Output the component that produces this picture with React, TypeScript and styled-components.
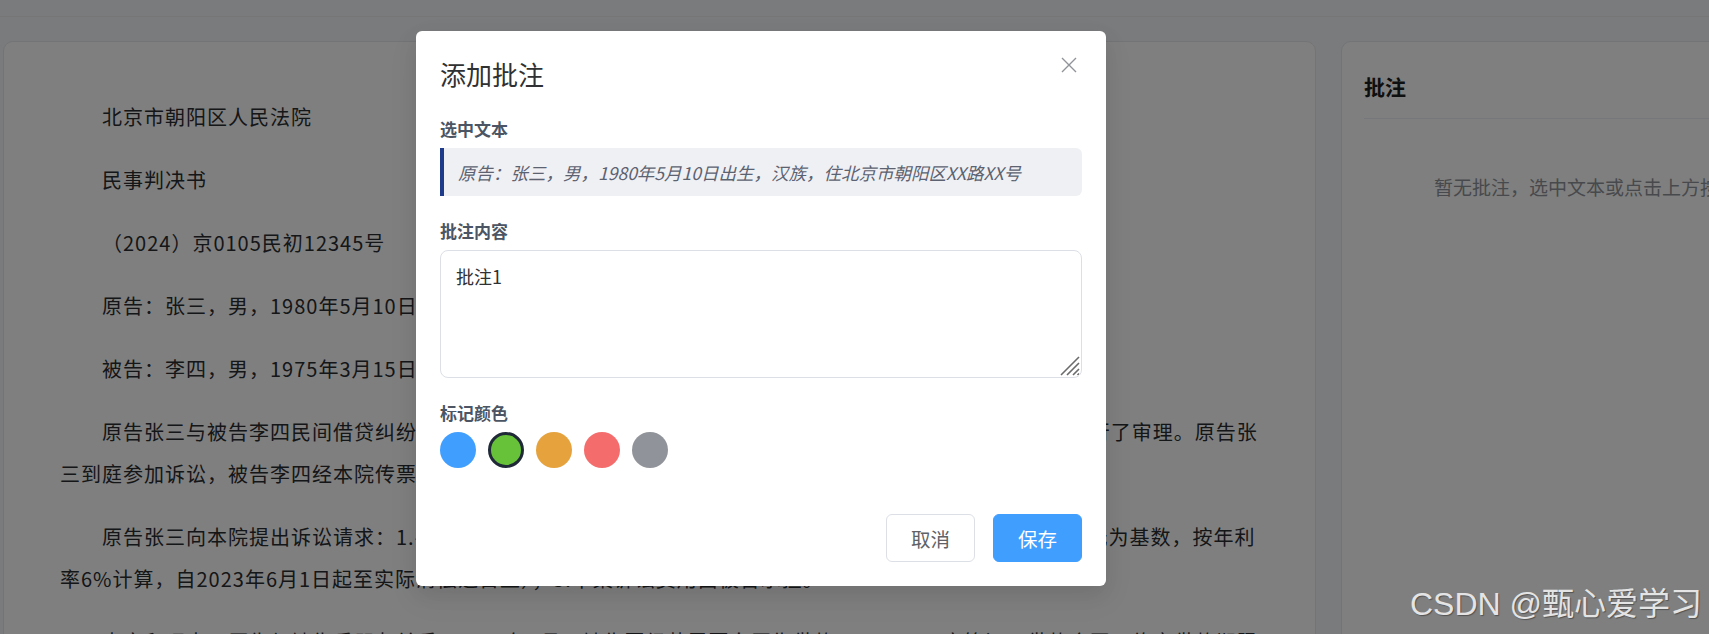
import React, { useState } from 'react';
import styled, { createGlobalStyle } from 'styled-components';

const GlobalStyle = createGlobalStyle`
	html, body {
		margin: 0;
		height: 100%;
		overflow: hidden;
		background: #f5f6f8;
		font-family: "Noto Sans CJK SC", "Noto Sans", sans-serif;
	}
	* {
		box-sizing: border-box;
	}
`;

const Page = styled.div`
	width: 1709px;
	height: 634px;
	overflow: hidden;
	position: relative;
`;

const TopBar = styled.div`
	height: 17px;
	border-bottom: 1px solid #ececec;
`;

const Main = styled.div`
	display: flex;
	gap: 25px;
	padding: 24px 0 0 3px;
`;

const Card = styled.div<{ $width: number }>`
	flex: 0 0 ${(p) => p.$width}px;
	height: 700px;
	background: #fff;
	border: 1px solid #e6e8ec;
	border-radius: 10px;
	padding: 24px 22px;
`;

const Document = styled.div`
	padding: 30px 33px 0 34px;
	color: #2b2d31;
	font-size: 20px;
	letter-spacing: 1px;
	line-height: 42px;
`;

const Para = styled.p`
	margin: 0 0 21px;
	text-indent: 42px;
`;

const SideTitle = styled.h3`
	margin: 0;
	height: 53px;
	line-height: 40px;
	font-size: 21px;
	font-weight: 700;
	color: #1d1e20;
	border-bottom: 1px solid #ebeef5;
`;

const Empty = styled.div`
	padding: 53px 0 0 70px;
	white-space: nowrap;
	font-size: 19px;
	line-height: 30px;
	color: #909399;
`;

const Overlay = styled.div`
	position: absolute;
	inset: 0;
	background: rgba(0, 0, 0, 0.5);
	padding: 31px 0 0 416px;
`;

const Dialog = styled.div`
	position: relative;
	width: 690px;
	background: #fff;
	border-radius: 6px;
	box-shadow: 0 12px 32px 4px rgba(0, 0, 0, 0.04), 0 8px 20px rgba(0, 0, 0, 0.08);
	padding: 25px 24px 24px;
`;

const DialogTitle = styled.div`
	font-size: 26px;
	line-height: 36px;
	color: #303133;
`;

const CloseBtn = styled.button`
	position: absolute;
	top: 24px;
	right: 27px;
	width: 20px;
	height: 20px;
	padding: 0;
	border: 0;
	background: none;
	display: flex;
	align-items: center;
	justify-content: center;
	cursor: pointer;
`;

const Field = styled.div<{ $gap: number }>`
	margin-top: ${(p) => p.$gap}px;
`;

const Label = styled.div`
	font-size: 17px;
	font-weight: 700;
	line-height: 22px;
	color: #4b5563;
	margin-bottom: 8px;
`;

const Quote = styled.div`
	height: 48px;
	display: flex;
	align-items: center;
	padding: 0 14px;
	border-left: 4px solid #1e3a8a;
	border-radius: 0 6px 6px 0;
	background: #eff0f4;
	font-size: 17.5px;
	font-style: italic;
	color: #5c6270;
	white-space: nowrap;
`;

const InputWrap = styled.div`
	position: relative;
`;

const NoteInput = styled.textarea`
	display: block;
	width: 100%;
	height: 128px;
	padding: 12px 15px;
	border: 1px solid #dcdfe6;
	border-radius: 8px;
	font-family: inherit;
	font-size: 18px;
	line-height: 26px;
	color: #303133;
	resize: vertical;
	outline: none;
`;

const Grip = styled.svg`
	position: absolute;
	right: 2px;
	bottom: 2px;
	pointer-events: none;
`;

const Swatches = styled.div`
	display: flex;
	gap: 12px;
`;

const Swatch = styled.button<{ $color: string; $active: boolean }>`
	width: 36px;
	height: 36px;
	padding: 0;
	border-radius: 50%;
	background: ${(p) => p.$color};
	border: ${(p) => (p.$active ? '3px solid #1f2937' : '0')};
	cursor: pointer;
`;

const Footer = styled.div`
	display: flex;
	justify-content: flex-end;
	gap: 18px;
	margin-top: 46px;
`;

const Button = styled.button<{ $primary?: boolean }>`
	height: 48px;
	padding: 0 24px;
	border-radius: 6px;
	font-family: inherit;
	font-size: 19.5px;
	border: 1px solid ${(p) => (p.$primary ? '#409eff' : '#dcdfe6')};
	background: ${(p) => (p.$primary ? '#409eff' : '#fff')};
	color: ${(p) => (p.$primary ? '#fff' : '#606266')};
	cursor: pointer;
`;

const Watermark = styled.div`
	position: absolute;
	right: 7px;
	bottom: 11px;
	font-family: "Liberation Sans", "Noto Sans CJK SC", sans-serif;
	font-size: 32px;
	line-height: 38px;
	color: #e4e4e4;
	text-shadow: 1px 1px 1px rgba(0, 0, 0, 0.35);
	pointer-events: none;
`;

const paragraphs = [
	'北京市朝阳区人民法院',
	'民事判决书',
	'（2024）京0105民初12345号',
	'原告：张三，男，1980年5月10日出生，汉族，住北京市朝阳区XX路XX号。',
	'被告：李四，男，1975年3月15日出生，汉族，住北京市海淀区XX路XX号。',
	'原告张三与被告李四民间借贷纠纷一案，本院于2024年1月15日立案后，依法适用简易程序，并公开开庭进行了审理。原告张三到庭参加诉讼，被告李四经本院传票传唤，无正当理由拒不到庭参加诉讼，本院依法缺席审理，被告仍未到庭。',
	'原告张三向本院提出诉讼请求：1.判令被告偿还借款本金人民币伍拾万元整；2.判令被告支付利息（以50万元为基数，按年利率6%计算，自2023年6月1日起至实际清偿之日止）；3.本案诉讼费用由被告承担。',
	'事实和理由：原告与被告系朋友关系。2023年6月，被告因经营需要向原告借款50万元，双方签订了借款合同，约定借款期限为一年。',
];

const colors = ['#409eff', '#67c23a', '#e6a23c', '#f56c6c', '#909399'];

const App = () => {
	const [active, setActive] = useState(1);
	const [note, setNote] = useState('批注1');

	return (
		<>
			<GlobalStyle />
			<Page>
				<TopBar />
				<Main>
					<Card $width={1313}>
						<Document>
							{paragraphs.map((text) => (
								<Para key={text}>{text}</Para>
							))}
						</Document>
					</Card>
					<Card $width={500}>
						<SideTitle>批注</SideTitle>
						<Empty>暂无批注，选中文本或点击上方按钮添加批注</Empty>
					</Card>
				</Main>

				<Overlay>
					<Dialog>
						<DialogTitle>添加批注</DialogTitle>
						<CloseBtn aria-label='关闭'>
							<svg width='16' height='16' viewBox='0 0 16 16'>
								<path d='M1 1L15 15M15 1L1 15' stroke='#909399' strokeWidth='1.4' fill='none' />
							</svg>
						</CloseBtn>

						<Field $gap={26}>
							<Label>选中文本</Label>
							<Quote>原告：张三，男，1980年5月10日出生，汉族，住北京市朝阳区XX路XX号</Quote>
						</Field>

						<Field $gap={24}>
							<Label>批注内容</Label>
							<InputWrap>
								<NoteInput value={note} onChange={(e) => setNote(e.target.value)} />
								<Grip width='20' height='20' viewBox='0 0 20 20'>
									<rect x='4' y='4' width='16' height='16' fill='#fff' />
									<path
										d='M1 19L19 1M7 19L19 7M13 19L19 13M17.5 19L19 17.5'
										stroke='#6b6b6b'
										strokeWidth='1.6'
										fill='none'
									/>
								</Grip>
							</InputWrap>
						</Field>

						<Field $gap={24}>
							<Label>标记颜色</Label>
							<Swatches>
								{colors.map((c, i) => (
									<Swatch key={c} $color={c} $active={i === active} onClick={() => setActive(i)} />
								))}
							</Swatches>
						</Field>

						<Footer>
							<Button>取消</Button>
							<Button $primary>保存</Button>
						</Footer>
					</Dialog>
				</Overlay>

				<Watermark>CSDN @甄心爱学习</Watermark>
			</Page>
		</>
	);
};

export default App;
